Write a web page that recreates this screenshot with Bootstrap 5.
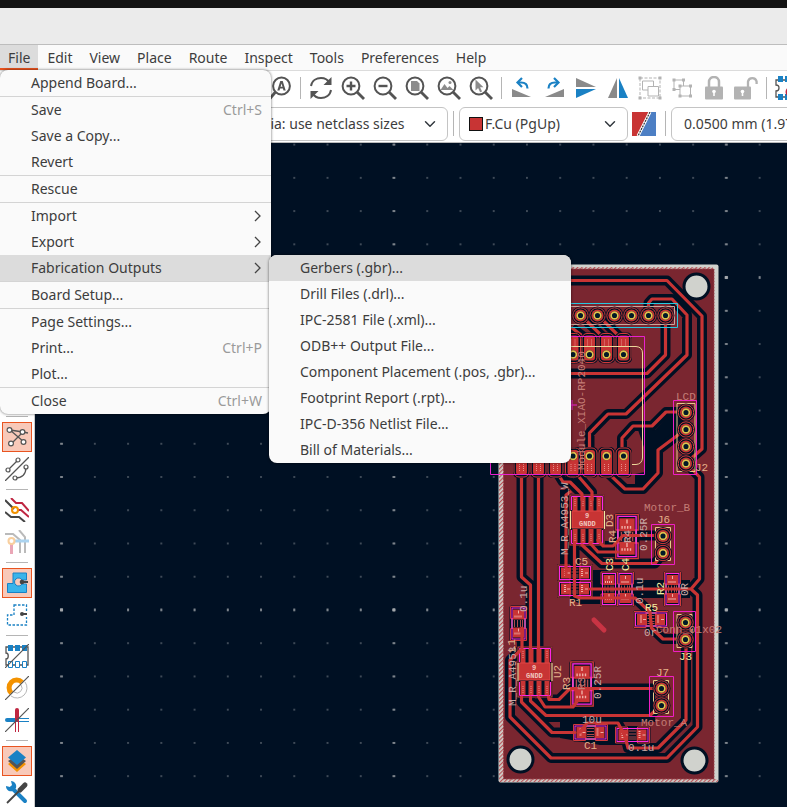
<!DOCTYPE html>
<html lang="en">
<head>
<meta charset="utf-8">
<meta name="viewport" content="width=device-width, initial-scale=1">
<title>PCB Editor</title>
<link href="https://cdn.jsdelivr.net/npm/bootstrap@5.3.0/dist/css/bootstrap.min.css" rel="stylesheet">
<style>
:root{--ink:#3d3d3d;--line:#c4c4c4;--blue:#1a81c4;--accent:#e95420}
body{font-family:"Noto Sans","Open Sans",sans-serif;font-size:14px;line-height:26px;color:var(--ink);background:#fff;overflow:hidden}
button{font:inherit;color:inherit}
.topstrip{height:8px;background:#131313}
.titlestrip{height:36px;background:#ebebeb}
.menubar{background:#fafafa;border-top:1px solid #bdbdbd;border-bottom:1px solid #dcdcdc;height:27px;gap:1px}
.menubar .nav-link{color:var(--ink);padding:0 8px;border:0;background:none;line-height:25px;height:25px;border-radius:0}
.menubar .nav-link.active{background:#dcdcdc;box-shadow:inset 0 -2px var(--accent)}
.filemenu,.submenu{position:absolute;background:#fafafa;border-radius:8px;box-shadow:0 0 3px #0009}
.filemenu{top:100%;left:0;width:271px;z-index:20}
.filemenu .dropdown-item{color:var(--ink);height:26px;padding:0 9px 0 31px;line-height:26px}
.filemenu .dropdown-item.picked{background:#dcdcdc}
.filemenu .dropdown-divider{margin:0;height:1px;border:0;background:#d4d4d4;opacity:1}
.filemenu .keys{color:#9a9a9a}
.filemenu .chev{width:12px;height:12px}
.submenu{top:0;left:100%;margin-left:-2px;width:302px;overflow:hidden}
.icon{width:24px;height:24px;display:block}
.tbar{height:34px;padding-left:264px}
.tbtn{width:32px;height:34px;padding:0 0 0 4px;border:0;background:none;flex:none}
.vsep{width:1px;height:22px;margin:0 4px;background:#b5b5b5;flex:none}
.optbar{height:38px;padding-left:249px;border-bottom:1px solid #bbb}
.optbar .vsep{height:25px;margin:0 5px}
.optbar .form-select{font-size:14px;color:var(--ink);height:34px;line-height:20px;padding:6px 30px 6px 12px;border:1px solid var(--line);border-radius:6px;flex:none;background-color:#fff;background-size:12px;background-position:right 11px center}
.viasel{width:199px}.optbar .layersel{width:169px;padding-left:25px}.gridsel{width:210px}
.swatch{position:absolute;left:10px;top:10px;width:14px;height:14px;background:#c83434;border:1px solid #111}
.sidebar{width:35px;padding-top:269px;border-right:1px solid #ccc;background:#fff;flex:none}
.sbtn{width:30px;height:30px;margin:1px 2px;padding:2px;border:1px solid transparent;background:none;flex:none}
.sbtn.on{background:#f8c9b9;border-color:var(--accent)}
.hsep{height:1px;width:22px;margin:4px 6px;background:#b5b5b5;flex:none}
.board{background:#001023;min-width:0}
.board svg{display:block;width:100%;height:100%}
.pcbtext{font-family:"Liberation Mono",monospace;font-size:11px;fill:#c47d76}
.silk{fill:#e6b08a}.silky{fill:#f2eda1}.fab{fill:#c9a9a6}
.tiny{font-size:7px;fill:#efc5bf;font-family:"Liberation Mono",monospace;font-weight:bold}
</style>
<script src="https://cdn.jsdelivr.net/npm/bootstrap@5.3.0/dist/js/bootstrap.bundle.min.js"></script>
</head>
<body class="vh-100 d-flex flex-column">
<div class="topstrip flex-shrink-0"></div>
<header class="titlestrip flex-shrink-0"></header>
<nav class="menubar nav flex-nowrap position-relative flex-shrink-0" aria-label="Main menu">
  <button class="nav-link active">File</button>
  <button class="nav-link">Edit</button>
  <button class="nav-link">View</button>
  <button class="nav-link">Place</button>
  <button class="nav-link">Route</button>
  <button class="nav-link">Inspect</button>
  <button class="nav-link">Tools</button>
  <button class="nav-link">Preferences</button>
  <button class="nav-link">Help</button>
  <div class="filemenu">
    <button class="dropdown-item">Append Board...</button>
    <hr class="dropdown-divider">
    <button class="dropdown-item d-flex justify-content-between">Save<span class="keys">Ctrl+S</span></button>
    <button class="dropdown-item">Save a Copy...</button>
    <button class="dropdown-item">Revert</button>
    <hr class="dropdown-divider">
    <button class="dropdown-item">Rescue</button>
    <hr class="dropdown-divider">
    <button class="dropdown-item d-flex justify-content-between align-items-center">Import<svg class="chev" viewBox="0 0 12 12"><path d="M5 1l5 5-5 5" fill="none" stroke="#444" stroke-width="1.300"/></svg></button>
    <button class="dropdown-item d-flex justify-content-between align-items-center">Export<svg class="chev" viewBox="0 0 12 12"><path d="M5 1l5 5-5 5" fill="none" stroke="#444" stroke-width="1.300"/></svg></button>
    <div class="position-relative">
      <button class="dropdown-item picked d-flex justify-content-between align-items-center">Fabrication Outputs<svg class="chev" viewBox="0 0 12 12"><path d="M5 1l5 5-5 5" fill="none" stroke="#444" stroke-width="1.300"/></svg></button>
      <div class="submenu">
        <button class="dropdown-item picked">Gerbers (.gbr)...</button>
        <button class="dropdown-item">Drill Files (.drl)...</button>
        <button class="dropdown-item">IPC-2581 File (.xml)...</button>
        <button class="dropdown-item">ODB++ Output File...</button>
        <button class="dropdown-item">Component Placement (.pos, .gbr)...</button>
        <button class="dropdown-item">Footprint Report (.rpt)...</button>
        <button class="dropdown-item">IPC-D-356 Netlist File…</button>
        <button class="dropdown-item">Bill of Materials...</button>
      </div>
    </div>
    <hr class="dropdown-divider">
    <button class="dropdown-item">Board Setup...</button>
    <hr class="dropdown-divider">
    <button class="dropdown-item">Page Settings...</button>
    <button class="dropdown-item d-flex justify-content-between">Print...<span class="keys">Ctrl+P</span></button>
    <button class="dropdown-item">Plot...</button>
    <hr class="dropdown-divider">
    <button class="dropdown-item d-flex justify-content-between">Close<span class="keys">Ctrl+W</span></button>
  </div>
</nav>

<svg width="0" height="0" class="position-absolute" aria-hidden="true">
  <defs>
    <g id="lens" fill="none" stroke="#545454"><circle cx="10" cy="10" r="8.400" stroke-width="2"/><path d="M16 16l7 7" stroke-width="2.800"/></g>
  </defs>
</svg>

<div class="tbar d-flex align-items-center overflow-hidden flex-shrink-0">
  <button class="tbtn" aria-label="Find"><svg class="icon" viewBox="0 0 24 24"><g fill="none" stroke="#545454"><circle cx="13.500" cy="10" r="8.400" stroke-width="2"/><path d="M7.500 16l-6 7" stroke-width="2.800"/></g><path d="M9.300 14.500L12.300 5h2.400l3 9.500h-2.200l-.6-2h-2.800l-.6 2zm3.300-3.700h1.900l-.95-3.300z" fill="#545454"/></svg></button>
  <div class="vsep"></div>
  <button class="tbtn" aria-label="Refresh"><svg class="icon" viewBox="0 0 24 24"><path d="M2 10C3 4 8 2 12 2c4 0 7 2 8.500 5M22 14c-1 6-6 8-10 8-4 0-7-2-8.500-5" fill="none" stroke="#545454" stroke-width="2"/><path d="M22.500 1v8h-8zM1.500 23v-8h8z" fill="#545454"/></svg></button>
  <button class="tbtn" aria-label="Zoom in"><svg class="icon" viewBox="0 0 24 24"><use href="#lens"/><path d="M10 5.500v9M5.500 10h9" stroke="#545454" stroke-width="2.400"/></svg></button>
  <button class="tbtn" aria-label="Zoom out"><svg class="icon" viewBox="0 0 24 24"><use href="#lens"/><path d="M5.500 10h9" stroke="#545454" stroke-width="2.400"/></svg></button>
  <button class="tbtn" aria-label="Zoom to page"><svg class="icon" viewBox="0 0 24 24"><use href="#lens"/><path d="M6 5h6l2.500 2.500V15H6z" fill="#8c8c8c"/></svg></button>
  <button class="tbtn" aria-label="Zoom to objects"><svg class="icon" viewBox="0 0 24 24"><use href="#lens"/><path d="M3.500 14l4-6 3 4 2-2 4 4z" fill="#8c8c8c"/><circle cx="13" cy="6.500" r="1.500" fill="#8c8c8c"/></svg></button>
  <button class="tbtn" aria-label="Zoom to selection"><svg class="icon" viewBox="0 0 24 24"><use href="#lens"/><path d="M6.500 3.500v11l2.600-2.400 2 4.200 2-.9-2-4.100h3.400z" fill="#8c8c8c"/></svg></button>
  <div class="vsep"></div>
  <button class="tbtn" aria-label="Rotate left"><svg class="icon" viewBox="0 0 24 24"><path d="M2 13v8h19z" fill="#8a8a8a"/><path d="M8 6.500h3c4 0 6.500 2 6.500 6" fill="none" stroke="#1a81c4" stroke-width="2.200"/><path d="M12 2L7.500 6.500 12 11" fill="none" stroke="#1a81c4" stroke-width="2.200"/></svg></button>
  <button class="tbtn" aria-label="Rotate right"><svg class="icon" viewBox="0 0 24 24"><path d="M22 13v8H3z" fill="#8a8a8a"/><path d="M16 6.500h-3c-4 0-6.500 2-6.500 6" fill="none" stroke="#1a81c4" stroke-width="2.200"/><path d="M12 2l4.500 4.500L12 11" fill="none" stroke="#1a81c4" stroke-width="2.200"/></svg></button>
  <button class="tbtn" aria-label="Flip vertically"><svg class="icon" viewBox="0 0 24 24"><path d="M2 2v9h20z" fill="#8a8a8a"/><path d="M2 22v-9h20z" fill="#1a81c4"/></svg></button>
  <button class="tbtn" aria-label="Flip horizontally"><svg class="icon" viewBox="0 0 24 24"><path d="M2 22h9V2z" fill="#8a8a8a"/><path d="M22 22h-9V2z" fill="#1a81c4"/></svg></button>
  <button class="tbtn" aria-label="Group"><svg class="icon" viewBox="0 0 24 24" fill="none" stroke="#b3b3b3"><path d="M2 2h20v20H2z" stroke-dasharray="3 1.500"/><path d="M4.500 5h11v9h-11z"/><path d="M10 10.500h10.500V20H10z" fill="#fff"/><path d="M.5.500h3v3h-3zM20.500.500h3v3h-3zM.5 20.500h3v3h-3zM20.500 20.500h3v3h-3z" fill="#b3b3b3" stroke="none"/></svg></button>
  <button class="tbtn" aria-label="Ungroup"><svg class="icon" viewBox="0 0 24 24" fill="none" stroke="#b3b3b3"><path d="M4 4h9.500v9.500H4z"/><path d="M10 10h10.500v10H10z" fill="#fff"/><path d="M2.500 2.500h3v3h-3zM12 2.500h3v3h-3zM2.500 12h3v3h-3zM8.500 8.500h3v3h-3zM19 8.500h3v3h-3zM8.500 18.500h3v3h-3zM19 18.500h3v3h-3z" fill="#b3b3b3" stroke="none"/></svg></button>
  <button class="tbtn" aria-label="Lock"><svg class="icon" viewBox="0 0 24 24"><path d="M7 11V6a5 5 0 0 1 10 0v5" fill="none" stroke="#b3b3b3" stroke-width="2.500"/><rect x="3" y="10.500" width="18" height="13" rx="1" fill="#b3b3b3"/><circle cx="12" cy="15.500" r="1.800" fill="#fff"/><path d="M12 16v4" stroke="#fff" stroke-width="1.600"/></svg></button>
  <button class="tbtn" aria-label="Unlock"><svg class="icon" viewBox="0 0 24 24"><path d="M14 11V5.500a4.400 4.400 0 0 1 8.600 0V8" fill="none" stroke="#b3b3b3" stroke-width="2.300"/><rect x="0" y="10.500" width="17" height="13" rx="1" fill="#b3b3b3"/><circle cx="8.500" cy="15.500" r="1.800" fill="#fff"/><path d="M8.500 16v4" stroke="#fff" stroke-width="1.600"/></svg></button>
  <div class="vsep"></div>
  <button class="tbtn" aria-label="Footprint editor"><svg class="icon" viewBox="0 0 24 24"><path d="M5 4H1v5c4 0 4 6 0 6v6h22V4z" fill="none" stroke="#545454" stroke-width="1.300"/><path d="M3 0h5v6H3zM10 0h5v6h-5zM3 18h5v6H3zM10 18h5v6h-5z" fill="#1a81c4"/><circle cx="16" cy="16" r="5.500" fill="#bf2641"/></svg></button>
</div>

<div class="optbar d-flex align-items-center overflow-hidden flex-shrink-0">
  <select class="form-select viasel" aria-label="Via size"><option>Via: use netclass sizes</option></select>
  <div class="vsep"></div>
  <div class="position-relative flex-shrink-0">
    <select class="form-select layersel" aria-label="Active layer"><option>F.Cu (PgUp)</option></select>
    <span class="swatch"></span>
  </div>
  <button class="tbtn" aria-label="Layer pair"><svg class="icon" viewBox="0 0 24 24"><path d="M0 0h18L6 24H0z" fill="#c83434"/><path d="M19 0h5v24H6z" fill="#4d7fc4"/><path d="M18 0L6 24" stroke="#fff" stroke-width="3"/><path d="M18 0L6 24" stroke="#333" stroke-width="1.200" stroke-dasharray="2 1"/></svg></button>
  <div class="vsep"></div>
  <select class="form-select gridsel" aria-label="Grid size"><option>0.0500 mm (1.97 mils)</option></select>
</div>

<main class="d-flex flex-grow-1 overflow-hidden">
  <aside class="sidebar d-flex flex-column">
    <div class="hsep"></div>
    <button class="sbtn on" aria-label="Show ratsnest"><svg class="icon" viewBox="0 0 24 24"><g stroke="#545454" stroke-width="1.300" fill="none"><path d="M5 5l14 12M5 5l13 2 5 1M18 7L6 19"/></g><g fill="#fff" stroke="#545454" stroke-width="1.200"><circle cx="4.500" cy="5" r="2.400"/><circle cx="17.500" cy="7" r="2.400"/><circle cx="18.500" cy="17" r="2.400"/><circle cx="6" cy="18.500" r="2.400"/></g></svg></button>
    <button class="sbtn" aria-label="Curved ratsnest"><svg class="icon" viewBox="0 0 24 24"><g stroke="#545454" stroke-width="1.300" fill="none"><path d="M0 24L24 0M3 13L13 3M21 10c0 7-3 11-11 11"/></g><g fill="#fff" stroke="#545454" stroke-width="1.200"><circle cx="3" cy="13" r="2"/><circle cx="13" cy="3" r="2"/><circle cx="21" cy="10" r="2"/><circle cx="10" cy="21" r="2"/></g></svg></button>
    <div class="hsep"></div>
    <button class="sbtn" aria-label="Net highlight"><svg class="icon" viewBox="0 0 24 24" fill="none" stroke-width="2"><path d="M0 2l9 9M0 14l6 5h8l6 5" stroke="#454545"/><path d="M6 0l5 5h6l7 8M12 12h4l8 7" stroke="#bf2641"/><circle cx="10" cy="12" r="3" stroke="#f39200"/></svg></button>
    <button class="sbtn" aria-label="Net colours" disabled><svg class="icon opacity-50" viewBox="0 0 24 24" fill="none" stroke-width="2"><path d="M0 4h8l7 6v13M14 0l6 7v16" stroke="#777"/><path d="M8 11h16" stroke="#5aa9e0" stroke-width="3"/><path d="M6.500 13v11" stroke="#d65070" stroke-width="3"/><circle cx="6.500" cy="11" r="3" stroke="#f3a040" fill="#fff"/></svg></button>
    <div class="hsep"></div>
    <button class="sbtn on" aria-label="Filled zones"><svg class="icon" viewBox="0 0 24 24"><path d="M8 2h13.500v7h-4.500a4 4 0 1 0 0 4h4.500v8.500H2.500V12.500H8z" fill="#39b4ea" stroke="#1a81c4"/><path d="M17 11h6" stroke="#444" stroke-width="2"/><circle cx="17" cy="11" r="2.300" fill="#444"/></svg></button>
    <button class="sbtn" aria-label="Zone outlines"><svg class="icon" viewBox="0 0 24 24"><path d="M9 2h12.500v20H2.500V12H9z" fill="none" stroke="#1a81c4" stroke-width="1.300" stroke-dasharray="2.500 1.500"/><path d="M14 11h10" stroke="#fff" stroke-width="6"/><path d="M17 11h5" stroke="#444" stroke-width="2"/><circle cx="17" cy="11" r="2" fill="#444"/></svg></button>
    <div class="hsep"></div>
    <button class="sbtn" aria-label="Footprint sketch"><svg class="icon" viewBox="0 0 24 24"><path d="M1 3h22v18H1v-6c3 0 3-6 0-6z" fill="none" stroke="#545454" stroke-width="1.300"/><path d="M3 1h5v6H3zM10 1h5v6h-5zM17 1h5v6h-5z" fill="#1a81c4"/><path d="M3.500 17.500h4v6h-4zM10.500 17.500h4v6h-4zM17.500 17.500h4v6h-4z" fill="#fff" stroke="#1a81c4"/><path d="M0 24L24 0" stroke="#545454" stroke-width="1.200"/></svg></button>
    <button class="sbtn" aria-label="Via sketch"><svg class="icon" viewBox="0 0 24 24"><g fill="none"><path d="M20 6a10 10 0 0 1-14 14" stroke="#b8b8b8"/><path d="M16 9a5 5 0 0 1-7 7" stroke="#b8b8b8"/><path d="M6.300 17A7.400 7.400 0 1 1 17 6.300" stroke="#f39200" stroke-width="5"/><path d="M0 24L24 0" stroke="#545454" stroke-width="1.200"/></g></svg></button>
    <button class="sbtn" aria-label="Track sketch"><svg class="icon" viewBox="0 0 24 24"><path d="M2 12h10" stroke="#1a81c4" stroke-width="4" stroke-linecap="round"/><path d="M12 10.500h12M12 13.500h12" stroke="#1a81c4"/><path d="M12 2v10" stroke="#bf2641" stroke-width="4" stroke-linecap="round"/><path d="M10.500 12v12M13.500 12v12" stroke="#bf2641"/><path d="M0 24L24 0" stroke="#545454" stroke-width="1.200"/></svg></button>
    <div class="hsep"></div>
    <button class="sbtn on" aria-label="Layers"><svg class="icon" viewBox="0 0 24 24"><path d="M3 15l9-6 9 6-9 8z" fill="#f39200"/><path d="M3 12l9-6 9 6-9 8z" fill="#545454"/><path d="M3 8.500L12 1l9 7.500-9 7.500z" fill="#1a81c4"/></svg></button>
    <button class="sbtn" aria-label="Tools"><svg class="icon" viewBox="0 0 24 24"><path d="M7 7l13 13" stroke="#1a81c4" stroke-width="4" stroke-linecap="round"/><path d="M1 5l4 1 2-2-1-4c4 0 6 4 5 7l-3 3c-4 1-7-1-7-5z" fill="#1a81c4"/><path d="M2 22L14 10" stroke="#454545" stroke-width="1.800"/><path d="M15 9l5-5" stroke="#454545" stroke-width="5" stroke-linecap="round"/></svg></button>
  </aside>
  <section class="board flex-grow-1" aria-label="Board canvas">
    <svg>
      <defs>
        <pattern id="g1" width="33.240" height="33.240" patternUnits="userSpaceOnUse" x="10" y="-15"><rect x="16" y="16" width="1.200" height="1.200" fill="#a4a8ac"/></pattern>
        <pattern id="g2" width="332.400" height="33.240" patternUnits="userSpaceOnUse" x="10" y="-15"><rect x="15" y="16" width="3" height="1.200" fill="#a4a8ac"/></pattern>
        <pattern id="g3" width="33.240" height="332.400" patternUnits="userSpaceOnUse" x="10" y="118"><rect x="16" y="15" width="1.200" height="3" fill="#a4a8ac"/></pattern>
        <pattern id="g4" width="332.400" height="332.400" patternUnits="userSpaceOnUse" x="10" y="118"><rect x="15" y="15" width="3" height="3" fill="#a4a8ac"/></pattern>
        <pattern id="hatch" width="3" height="3" patternUnits="userSpaceOnUse" patternTransform="rotate(-45)"><rect width="3" height="1.200" fill="#b9545a"/></pattern>
        <g id="pad"><circle r="9" fill="#001023"/><circle r="7.700" fill="none" stroke="#d23a3a"/><circle r="6" fill="#c83434"/><circle r="4.300" fill="#001023"/><circle r="3.400" fill="#001b28" stroke="#e3c04e" stroke-width="1.700"/></g>
        <g id="pin"><rect x="-8.500" y="-22" width="17" height="31" rx="5" fill="#001023"/><rect x="-7.500" y="-21" width="15" height="29" rx="5" fill="none" stroke="#d23a3a"/><rect x="-5.500" y="-19" width="11" height="25" rx="3" fill="#c83434"/><path d="M-2-15v7M2-15v7" stroke="#e58f8a" stroke-dasharray="1 1"/><circle r="4.300" fill="#001023"/><circle r="3.400" fill="#001b28" stroke="#e3c04e" stroke-width="1.700"/></g>
        <g id="smd"><rect x="-9" y="-18" width="18" height="36" rx="2" fill="#001023"/><path d="M-4-3.500v7M-1-3.500v7M2-3.500v7M4-3.500v7" stroke="#b04a4c"/><path d="M-6.500-5v10M6.500-5v10" stroke="#d8cc98"/><path d="M-8-5V-17H8V-5zM-8 5V17H8V5z" fill="none" stroke="#d23a3a"/><rect x="-5.500" y="-14" width="11" height="10" fill="#c83434"/><rect x="-5.500" y="4" width="11" height="10" fill="#c83434"/><rect x="-6.500" y="-15.500" width="13" height="31" fill="none" stroke="#ff26e2"/><path d="M-4-7h8M-4 10h8" stroke="#efb0a8" stroke-width="2" stroke-dasharray="1 1"/><path d="M0-13v3M0 5v3" stroke="#efb0a8"/></g>
        <g id="ic"><rect x="-18" y="-26" width="36" height="52" rx="2" fill="#001023"/><path d="M-12-23v14M-4-23v14M4-23v14M12-23v14M-12 23V9M-4 23V9M4 23V9M12 23V9" stroke="#c83434" stroke-width="5"/><path d="M-12-21v8M-4-21v8M4-21v8M12-21v8M-12 21v-8M-4 21v-8M4 21v-8M12 21v-8" stroke="#e58f8a" stroke-dasharray="1 1"/><rect x="-17" y="-25" width="34" height="50" fill="none" stroke="#d23a3a"/><path d="M-15.500-10V-23.500H15.500V-10M-15.500 10V23.500H15.500V10" fill="none" stroke="#ff26e2"/></g>
        <path id="traces" d="M566 280.500H667L702 316V449L686 463L699.500 477V579L691 589L697.500 595V727L667 758H551L510 717V660L521 650M566 373.500H647L665.500 355V315M648.500 315V303L652 299H672L687 315V355L626 414H608L589.500 433V456M686 412H666L652 426H633L622 438V456M686 429L658 450V473L643 489H625L607 472V456M572 328L606 354M580.500 315L606 340M597.500 315L623 340M521.500 470V577L530.500 585V660M538.500 470V660M555.500 470L563 482H570L582 494V500M573 470L592 492V500M566 575V495L570 492M574.500 543V596L580 598H635L650 612L651.500 628L663 639H686M590 589H691M663 535.500H623L613 546H603L598 540M582 545L602 563.500H655L663 553M590 543L598 552H618M686 640V720L658 748H628L625 736L618 723H587L580 732M521.500 697V702L552 732.500H575M530.500 697V701L546 715.500H650L661 705M538.500 697L545 707H573L578 700M548.500 697L549 699.500H559L570 688.500H661M522 628V648"/>
      </defs>
      <rect width="100%" height="100%" fill="#001023"/>
      <g shape-rendering="crispEdges"><rect width="100%" height="100%" fill="url(#g1)"/><rect width="100%" height="100%" fill="url(#g2)"/><rect width="100%" height="100%" fill="url(#g3)"/><rect width="100%" height="100%" fill="url(#g4)"/></g>
      <g transform="translate(-35 -143)">
        <rect x="498.500" y="264.500" width="220" height="518" rx="2" fill="#d0d2cd"/>
        <path d="M499 267h214v3H504v509h214v3H499z" fill="url(#hatch)"/>
        <rect x="503.500" y="269" width="210.500" height="510" fill="#7a2630" stroke="#9b4048" stroke-dasharray="2 1"/>
        <rect x="505" y="270.500" width="207.500" height="507" fill="#7a2630"/>
        <path d="M635 492V474L645 472V450L638 430H655L668 416H686V432L662 452V475L645 492zM580 570H612V604H580zM612 580H690V598H612zM595 684H655V722H545L530 700H560zM560 720H620L640 745H600L560 738zM560 490h10v78h-10z" fill="#001023"/>
        <use href="#traces" fill="none" stroke="#001023" stroke-width="10" stroke-linejoin="round"/>
        <g>
          <use href="#smd" transform="translate(575 573) rotate(90)"/><use href="#smd" transform="translate(575 589) rotate(90)"/>
          <use href="#smd" x="609" y="589"/><use href="#smd" x="625.500" y="589"/><use href="#smd" x="672.500" y="589"/>
          <use href="#smd" x="518.500" y="623.500"/>
          <use href="#smd" transform="translate(651 619.500) rotate(90)"/><use href="#smd" transform="translate(590.500 732.500) rotate(90)"/><use href="#smd" transform="translate(632.500 735) rotate(90)"/>
          <use href="#smd" transform="translate(627 536.500) scale(1.400 1.300)"/><use href="#smd" transform="translate(582 684) scale(1.400 1.300)"/>
          <use href="#ic" x="587" y="520"/><use href="#ic" x="535" y="672"/>
        </g>
        <use href="#traces" fill="none" stroke="#c83434" stroke-width="3.200" stroke-linejoin="round" stroke-linecap="round"/>
        <g fill="#c83434" stroke="#e04444"><path d="M572 511h31v17h-31zM519 663h31v17h-31z"/></g>
        <path d="M570.500 511v18M604.500 511v18M518 663v18M552 663v18" stroke="#f2eda1"/>
        <g><text class="tiny" x="585" y="518">9</text><text class="tiny" x="579" y="526">GNDD</text><text class="tiny" x="532" y="670">9</text><text class="tiny" x="526" y="678">GNDD</text></g>
        <path d="M560 303.500H677.500V327.500H560" fill="none" stroke="#26c9e0"/><path d="M560 306.500H674.500V324.500H560" fill="none" stroke="#c9a79c"/>
        <use href="#pin" x="573" y="354.500"/><use href="#pin" x="589.500" y="354.500"/><use href="#pin" x="606.500" y="354.500"/><use href="#pin" x="623.500" y="354.500"/>
        <use href="#pad" x="580.500" y="315.500"/><use href="#pad" x="597.500" y="315.500"/><use href="#pad" x="614.500" y="315.500"/><use href="#pad" x="631.500" y="315.500"/><use href="#pad" x="648.500" y="315.500"/><use href="#pad" x="665.500" y="315.500"/>
        <g transform="translate(0 912) scale(1 -1)"><use href="#pin" x="521.500" y="456"/><use href="#pin" x="538.500" y="456"/><use href="#pin" x="555.500" y="456"/><use href="#pin" x="573" y="456"/><use href="#pin" x="589.500" y="456"/><use href="#pin" x="606.500" y="456"/><use href="#pin" x="623.500" y="456"/></g>
        <path d="M490.500 440V474.500H644.500V336.500H560M567 405h10M572 400v10" fill="none" stroke="#e821cf"/>
        <path d="M560 346.500H636Q642.500 347 642.500 353V458Q642 464 636 464.500H632" fill="none" stroke="#ecd79a"/>
        <g fill="none" stroke="#e8c98a"><path d="M677 403.500h18v68h-18zM655.500 527.500h15v33h-15zM677 614.500h15v33h-15zM653.500 680.500h15v33h-15z"/></g>
        <g fill="none" stroke="#f01fc4"><path d="M673.500 400.500h23v74h-23zM651.500 524.500h23v40h-23zM673.500 611.500h22v40h-22zM649.500 676.500h24v40h-24z"/></g>
        <use href="#pad" x="686" y="412.500"/><use href="#pad" x="686" y="429.500"/><use href="#pad" x="686" y="446.500"/><use href="#pad" x="686" y="463.500"/>
        <use href="#pad" x="663" y="536"/><use href="#pad" x="663" y="553"/><use href="#pad" x="685.500" y="622.500"/><use href="#pad" x="685.500" y="639.500"/><use href="#pad" x="661.500" y="688.500"/><use href="#pad" x="661.500" y="705.500"/>
        <g fill="#d0d2cd" stroke="#001023" stroke-width="3"><circle cx="696.500" cy="286.500" r="12.500"/><circle cx="520.500" cy="759.500" r="12.500"/><circle cx="694.500" cy="760.500" r="12.500"/></g>
        <path d="M594 620l10 10" stroke="#c83444" stroke-width="5" stroke-linecap="round"/>
        <g class="pcbtext">
          <text x="676" y="400">LCD</text><text class="silk" x="695" y="471">J2</text><text x="644" y="511">Motor_B</text><text class="silk" x="657" y="523">J6</text><text class="silk" x="656" y="676">J7</text><text x="641" y="726">Motor_A</text><text class="silk" x="575" y="565">C5</text><text class="silk" x="569" y="606">R1</text><text class="silky" x="645" y="611">R5</text><text class="silky" x="679" y="660">J3</text><text class="silk" x="584" y="749">C1</text><text class="fab" x="628" y="751">0.1u</text><text class="fab" x="582" y="723">10u</text><text class="fab" x="644" y="636">0r</text><text x="656" y="633">Conn_01x02</text>
          <text transform="translate(585 470) rotate(-90)">Module_XIAO-RP2040</text>
          <text class="fab" transform="translate(568 555) rotate(-90)">M_R_A4953_W</text><text class="fab" transform="translate(516 706) rotate(-90)">M_R_A4953</text>
          <text class="silk" transform="translate(613 527) rotate(-90)">D3</text><text class="silk" transform="translate(616 543) rotate(-90)">R4</text><text class="fab" transform="translate(631 543) rotate(-90)">R4</text><text class="fab" transform="translate(647 551) rotate(-90)">0.25R</text><text class="silky" transform="translate(613 571) rotate(-90)">C3</text><text class="silky" transform="translate(629 571) rotate(-90)">C4</text><text class="fab" transform="translate(643 604) rotate(-90)">0.1u</text><text class="silky" transform="translate(664 595) rotate(-90)">R2</text><text class="fab" transform="translate(688 596) rotate(-90)">0R</text><text class="fab" transform="translate(527 612) rotate(-90)">0.1u</text><text class="silk" transform="translate(561 678) rotate(-90)">U2</text><text class="silk" transform="translate(570 690) rotate(-90)">R3</text><text transform="translate(585 690) rotate(-90)">R3</text><text class="fab" transform="translate(601 699) rotate(-90)">0.25R</text><text class="silk" transform="translate(515 652) rotate(-90)">L1</text>
        </g>
      </g>
    </svg>
  </section>
</main>
</body>
</html>
